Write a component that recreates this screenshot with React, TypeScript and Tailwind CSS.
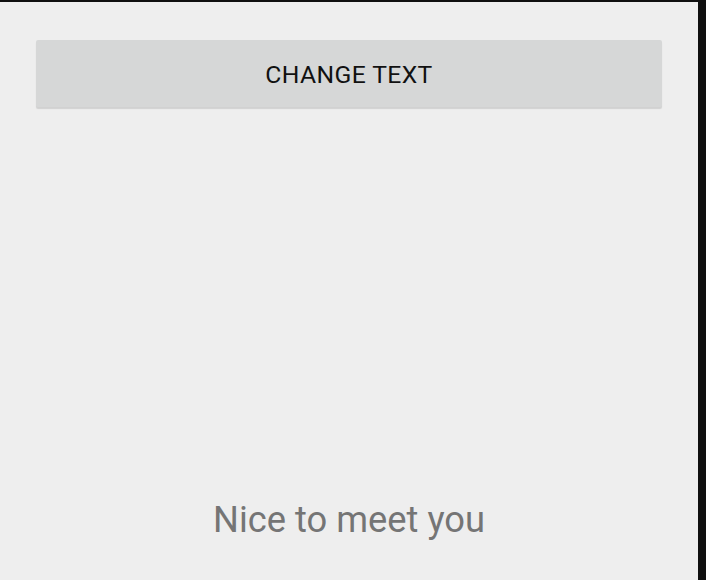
export default function App() {
  return (
    <div className="w-[706px] h-[580px] bg-[#0f0f0f] pt-[2px] pr-[8px]" style={{ fontFamily: 'Roboto, "Liberation Sans", sans-serif' }}>
      <div className="h-[578px] bg-[#eeeeee] flex flex-col px-[36px] pt-[38px]">
        <button className="h-[67px] w-full bg-[#d6d7d7] rounded-[2px] shadow-[0_2px_1px_rgba(0,0,0,0.12)] text-[#111111] text-[24.7px] font-normal tracking-[0.4px] pt-[2px]">
          CHANGE TEXT
        </button>
        <div className="flex-1" />
        <div className="text-center text-[#757575] text-[36.3px] leading-none pb-[42px]">Nice to meet you</div>
      </div>
    </div>
  );
}
